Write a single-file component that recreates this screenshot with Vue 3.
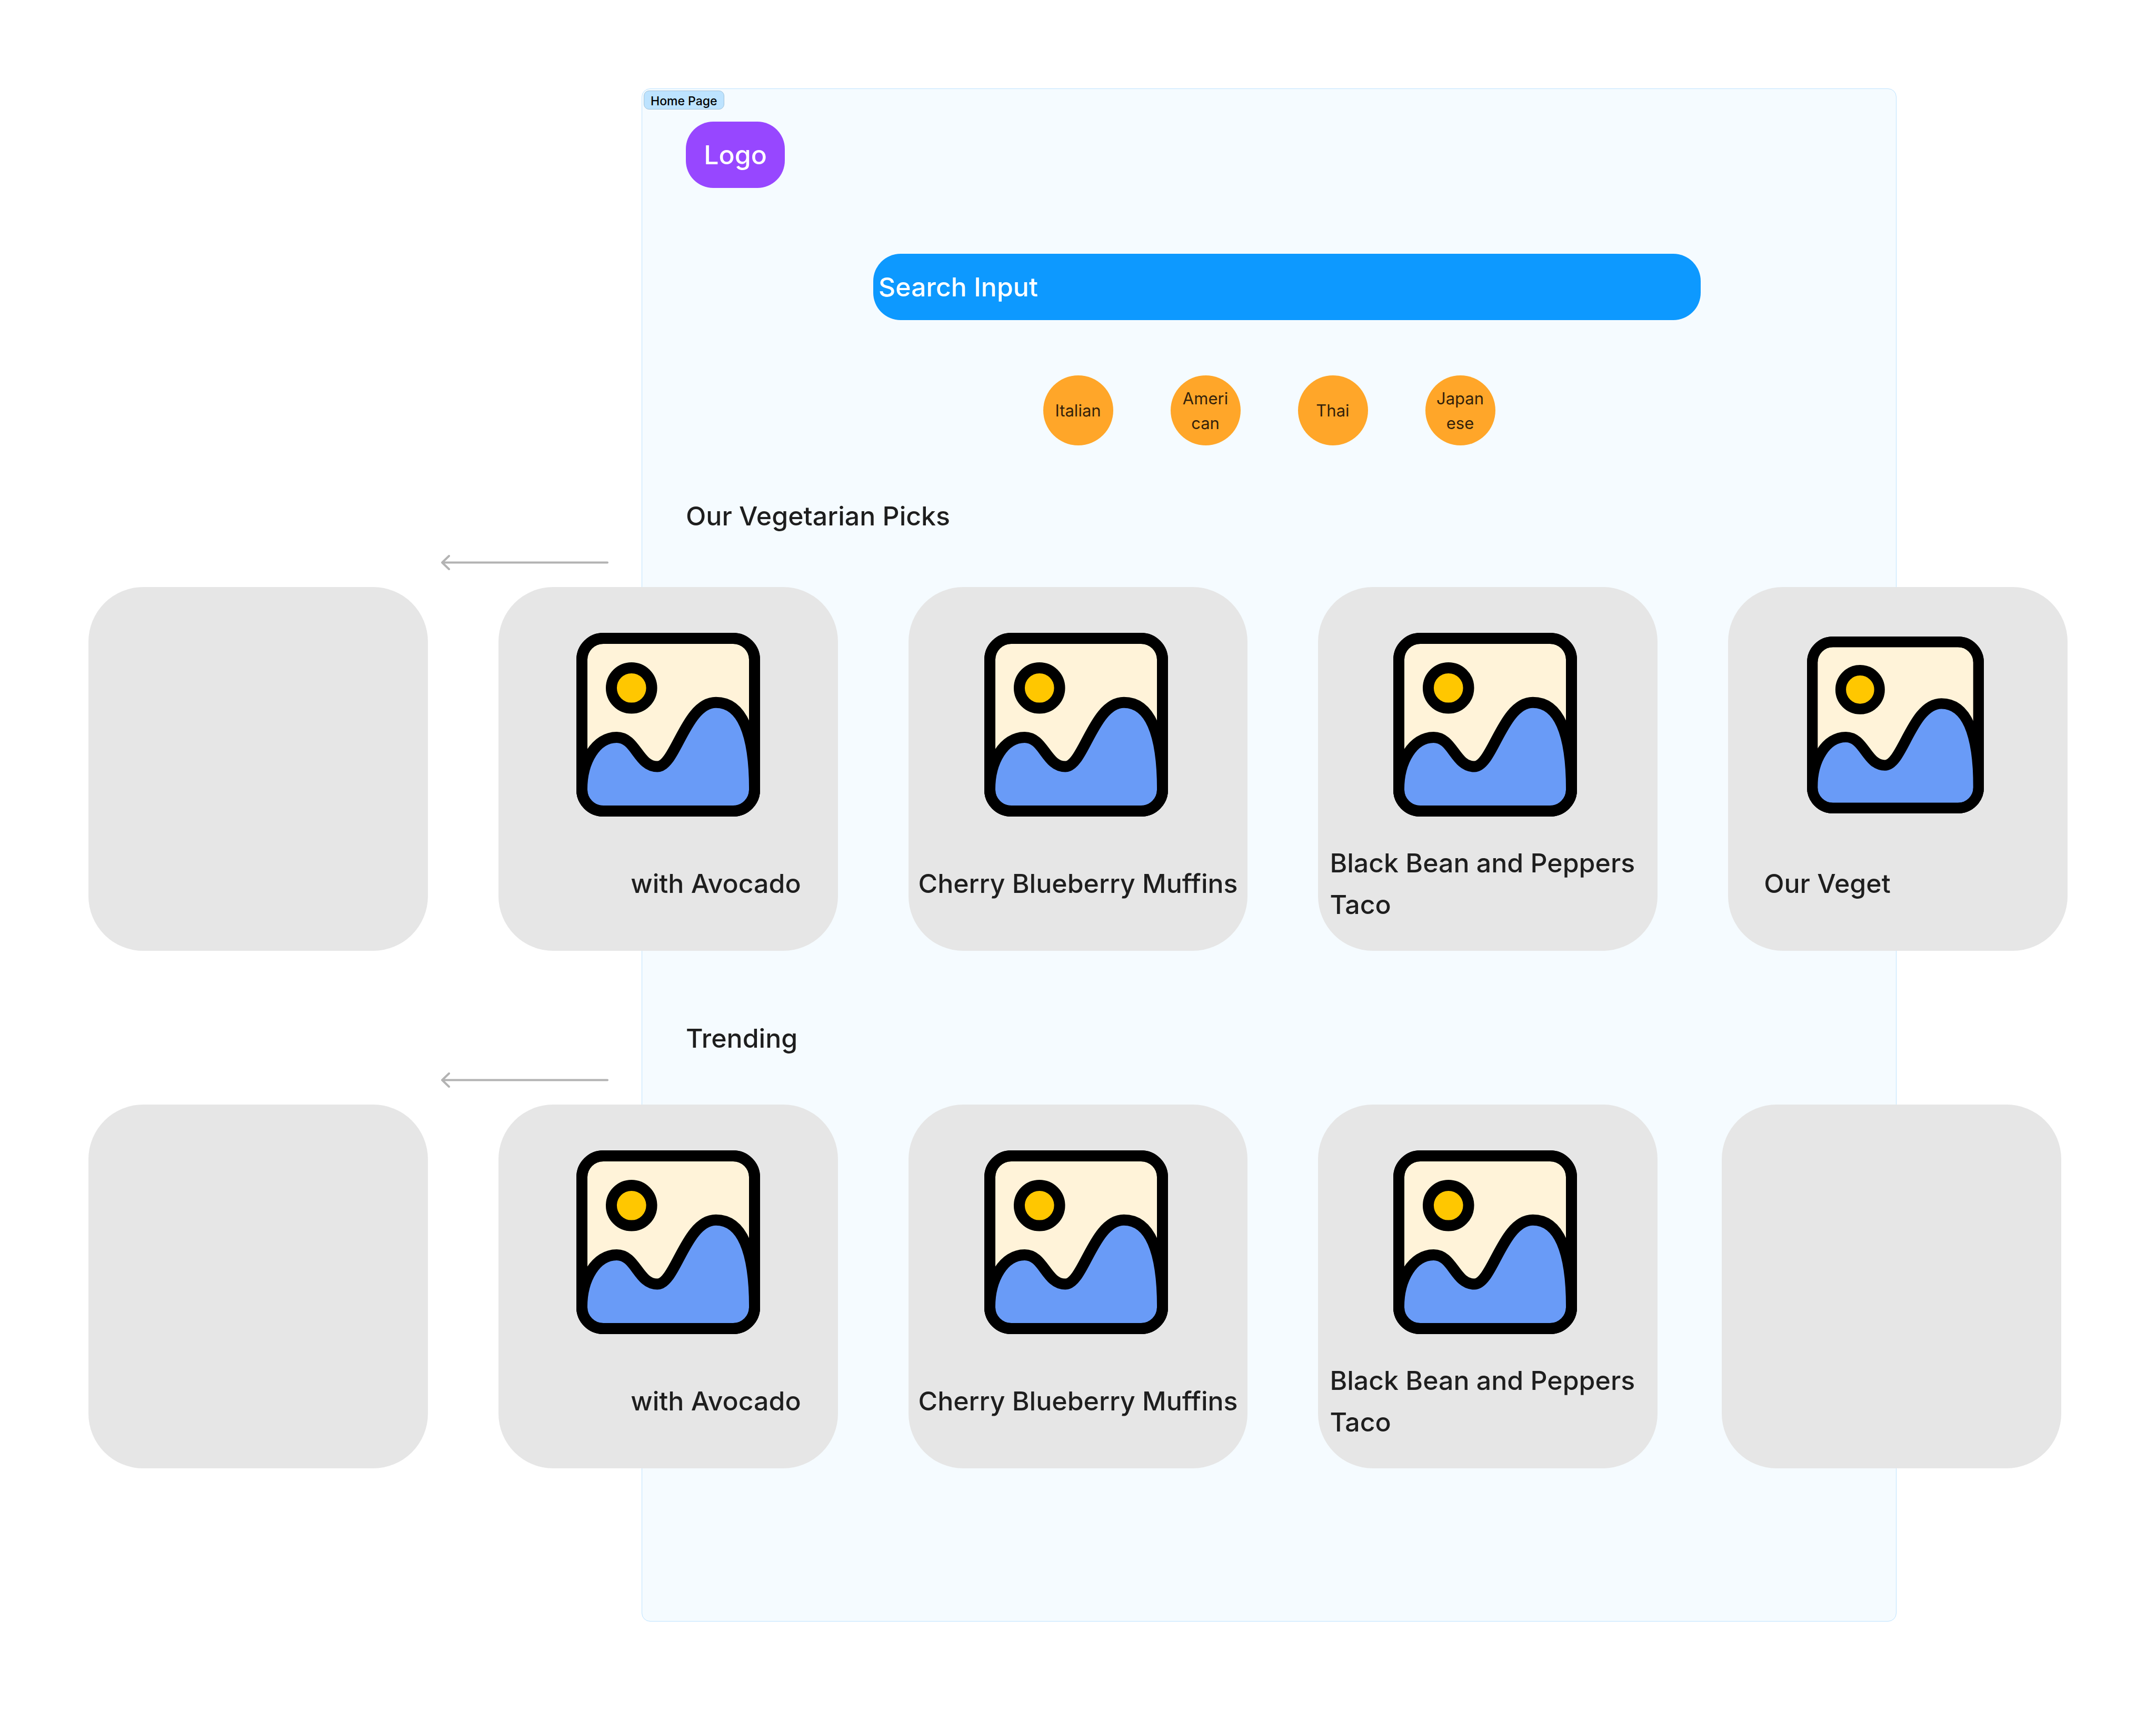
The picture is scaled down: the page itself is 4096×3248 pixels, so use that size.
<script setup>
const cuisines = ['Italian', 'American', 'Thai', 'Japanese']

const shelves = [
  {
    id: 'picks',
    title: 'Our Vegetarian Picks',
    cards: [
      { kind: 'blank' },
      { kind: 'end', label: 'with Avocado', art: true },
      { kind: 'center', label: 'Cherry Blueberry Muffins', art: true },
      { kind: 'start', label: 'Black Bean and Peppers Taco', art: true },
      { kind: 'inset', label: 'Our Veget', art: true }
    ]
  },
  {
    id: 'trending',
    title: 'Trending',
    cards: [
      { kind: 'blank' },
      { kind: 'end', label: 'with Avocado', art: true },
      { kind: 'center', label: 'Cherry Blueberry Muffins', art: true },
      { kind: 'start', label: 'Black Bean and Peppers Taco', art: true },
      { kind: 'blank' }
    ]
  }
]
</script>

<template>
  <main class="board">
    <div class="frame"></div>

    <header class="top">
      <span class="tag">Home Page</span>
      <a class="logo" href="#">Logo</a>
    </header>

    <form class="search" role="search" @submit.prevent>
      <input class="search-box" type="text" placeholder="Search Input" aria-label="Search Input" />
    </form>

    <nav class="cuisines" aria-label="Cuisines">
      <button v-for="name in cuisines" :key="name" class="cuisine" type="button">{{ name }}</button>
    </nav>

    <section v-for="shelf in shelves" :key="shelf.id" class="shelf" :class="shelf.id">
      <h2 class="shelf-title">{{ shelf.title }}</h2>
      <svg class="arrow" viewBox="0 0 318 29" aria-hidden="true">
        <path d="M316 14.5H2M15 2L2 14.5L15 27" />
      </svg>
      <div class="cards">
        <article v-for="(card, i) in shelf.cards" :key="i" class="card" :class="card.kind">
          <div v-if="card.art" class="art">
            <svg class="picture" viewBox="0 0 533 533" aria-hidden="true">
              <rect class="sky" x="16" y="16" width="501" height="501" rx="62" />
              <circle class="sun" cx="160" cy="160" r="58.5" />
              <path
                class="hills"
                d="M16 454C16 372 57 303 117 303C173 303 179 388 235 388C288 388 317 202 405 202C480 202 517 290 517 454A62 62 0 0 1 455 517H78A62 62 0 0 1 16 454Z"
              />
              <rect class="edge" x="16" y="16" width="501" height="501" rx="62" />
            </svg>
          </div>
          <p v-if="card.label" class="label">{{ card.label }}</p>
        </article>
      </div>
    </section>
  </main>
</template>

<style>
body {
  margin: 0;
  background: #fff;
}
</style>

<style scoped>
.board {
  box-sizing: border-box;
  display: grid;
  grid-template-columns: 1219px minmax(0, 1fr) 493px;
  grid-template-rows: auto auto auto auto auto 1fr;
  min-height: 100vh;
  padding: 168px 0;
  font-family: Inter, "Liberation Sans", sans-serif;
  font-size: 50px;
  font-weight: 500;
  line-height: 79px;
  color: #1e1e1e;
}

.frame {
  grid-column: 2;
  grid-row: 1 / -1;
  border: 1px solid #bde3ff;
  border-radius: 16px;
  background: #f5fbff;
}

.top {
  grid-column: 2;
  grid-row: 1;
  display: flex;
  flex-direction: column;
  align-items: flex-start;
  gap: 23px;
  padding: 4px;
}

.tag {
  box-sizing: border-box;
  height: 36px;
  padding: 0 12px;
  border: 1px solid #a0c1d9;
  border-radius: 10px;
  background: #bde3ff;
  font-size: 23px;
  line-height: 38px;
  color: #000;
}

.logo {
  display: grid;
  place-items: center;
  width: 188px;
  height: 126px;
  margin-left: 80px;
  border-radius: 52px;
  background: #9747ff;
  color: #fff;
  text-decoration: none;
}

.search {
  grid-column: 2;
  grid-row: 2;
  padding: 121px 372px 0 440px;
}

.search-box {
  box-sizing: border-box;
  display: block;
  width: 100%;
  height: 126px;
  padding: 0 10px;
  border: 0;
  border-radius: 52px;
  background: #0d99ff;
  font: inherit;
  color: #fff;
}

.search-box::placeholder {
  color: #fff;
  opacity: 1;
}

.cuisines {
  grid-column: 2;
  grid-row: 3;
  display: flex;
  justify-content: center;
  gap: 109px;
  padding-top: 105px;
}

.cuisine {
  width: 133px;
  height: 133px;
  padding: 0 19px;
  border: 0;
  border-radius: 50%;
  background: #ffa629;
  font: inherit;
  font-size: 31px;
  font-weight: 400;
  line-height: 47px;
  color: #33210a;
  overflow-wrap: anywhere;
}

.shelf {
  grid-column: 1 / -1;
}

.picks {
  grid-row: 4;
  padding-top: 95px;
}

.trending {
  grid-row: 5;
  padding-top: 127px;
}

.shelf-title {
  margin: 0 0 34px 1303px;
  font: inherit;
}

.trending .shelf-title {
  margin-bottom: 25px;
}

.arrow {
  display: block;
  width: 318px;
  height: 29px;
  margin: 0 0 32px 838px;
  fill: none;
  stroke: #b3b3b3;
  stroke-width: 4;
  stroke-linecap: round;
  stroke-linejoin: round;
}

.cards {
  display: grid;
  grid-template-columns: repeat(5, minmax(0, 1fr));
  column-gap: 134px;
  padding: 0 168px;
}

.card {
  box-sizing: border-box;
  display: flex;
  flex-direction: column;
  height: 691px;
  padding: 87px 22px 48px;
  border-radius: 104px;
  background: #e6e6e6;
}

/* The closing card of the second shelf sits closer to its neighbour. */
.trending .card:last-child {
  margin: 0 12px 0 -12px;
}

.art {
  display: grid;
  place-items: center;
  height: 349px;
}

.picture {
  width: 349px;
  height: 349px;
  stroke: #000;
  stroke-width: 32;
}

.sky {
  fill: #fff3d9;
}

.sun {
  fill: #ffc700;
}

.hills {
  fill: #699bf7;
}

.edge {
  fill: none;
}

.label {
  display: flex;
  flex: 1;
  align-items: center;
  margin: 48px 0 0;
}

.end .label {
  justify-content: flex-end;
  padding-right: 48px;
}

.center .art {
  padding-right: 6px;
}

.center .label {
  justify-content: center;
  white-space: nowrap;
}

.start .art,
.inset .art {
  padding-right: 10px;
}

.inset .picture {
  width: 336px;
  height: 336px;
}

.inset .label {
  padding-left: 46px;
}
</style>
